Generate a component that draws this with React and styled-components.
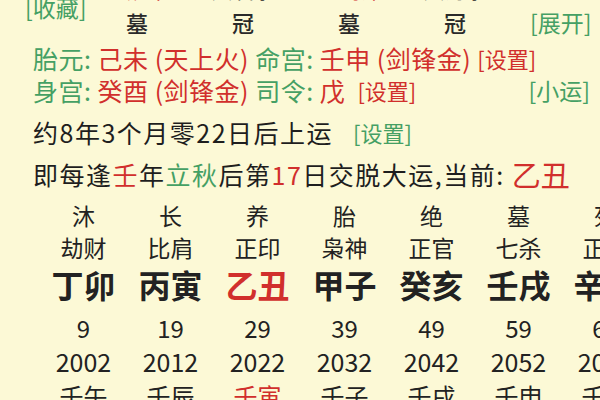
import React from "react";
import styled, { createGlobalStyle } from "styled-components";

const GREEN = "#45a064";
const RED = "#d12f2c";
const DARK = "#1e1e1e";
const FONT = `"Noto Sans CJK SC", "Noto Sans", sans-serif`;

const Global = createGlobalStyle`
  html, body { margin: 0; padding: 0; background: #fcf9d6; }
  body { font-family: ${FONT}; color: ${DARK}; overflow: hidden; }
`;

const Page = styled.div`
  width: 600px;
  height: 400px;
  overflow: hidden;
  background: #fcf9d6;
`;

const HeadGrid = styled.div`
  display: grid;
  grid-template-columns: 59px repeat(4, 106px) auto;
  padding-left: 25px;
  height: ${(p) => p.$h}px;
  margin-top: ${(p) => p.$mt || 0}px;
  align-items: center;
`;

const CutText = styled.div`
  font-size: 21px;
  line-height: 24px;
  color: ${(p) => (p.$red ? RED : DARK)};
  text-align: ${(p) => p.$align || "center"};
  white-space: nowrap;
`;

const Link = styled.span`
  color: ${(p) => (p.$red ? RED : GREEN)};
  font-size: ${(p) => p.$size || 22}px;
  line-height: 22px;
  letter-spacing: 0;
  white-space: nowrap;
  margin-left: ${(p) => p.$ml || 0}px;
`;

const CornerLink = styled(Link)`
  align-self: start;
  margin-top: -5px;
`;

const RightLink = styled(Link)`
  padding-left: 22px;
`;

const Pillar = styled.div`
  font-size: 22px;
  line-height: 36px;
  color: #2a2a2a;
  text-align: center;
  font-weight: 500;
`;

const InfoLine = styled.div`
  display: flex;
  align-items: center;
  padding-left: 33px;
  padding-right: 10px;
  height: ${(p) => p.$h}px;
  margin-top: ${(p) => p.$mt || 0}px;
  font-size: 25px;
  letter-spacing: ${(p) => p.$ls || 0}px;
  white-space: nowrap;
`;

const G = styled.span`
  color: ${GREEN};
`;
const R = styled.span`
  color: ${RED};
  font-size: ${(p) => (p.$big ? "29px" : "inherit")};
  letter-spacing: ${(p) => (p.$big ? "0" : "inherit")};
`;
const D = styled.span`
  color: ${DARK};
`;

const Spacer = styled.span`
  flex: 1;
`;

const Table = styled.div`
  display: grid;
  grid-template-columns: repeat(7, 87px);
  grid-template-rows: 34px 30px 44px 42px 26px 42px;
  grid-auto-flow: column;
  padding-left: 40px;
`;

const Cell = styled.div`
  display: flex;
  align-items: center;
  justify-content: center;
  white-space: nowrap;
  font-size: ${(p) => p.$size}px;
  font-weight: ${(p) => (p.$bold ? 700 : 400)};
  color: ${(p) => (p.$red ? RED : "#222")};
  font-family: ${FONT};
`;

const columns = [
  ["沐", "劫财", "丁卯", "9", "2002", "壬午"],
  ["长", "比肩", "丙寅", "19", "2012", "壬辰"],
  ["养", "正印", "乙丑", "29", "2022", "壬寅", true],
  ["胎", "枭神", "甲子", "39", "2032", "壬子"],
  ["绝", "正官", "癸亥", "49", "2042", "壬戌"],
  ["墓", "七杀", "壬戌", "59", "2052", "壬申"],
  ["死", "正财", "辛酉", "69", "2062", "壬午"],
];

export default function App() {
  return (
    <Page>
      <Global />
      <HeadGrid $h={24} $mt={-23}>
        <span />
        <CutText $red $align="right">炉中火</CutText>
        <CutText>大溪水</CutText>
        <CutText $red $align="right">剑锋金</CutText>
        <CutText>大海水</CutText>
      </HeadGrid>
      <HeadGrid $h={41}>
        <CornerLink $size={23}>[收藏]</CornerLink>
        <Pillar>墓</Pillar>
        <Pillar>冠</Pillar>
        <Pillar>墓</Pillar>
        <Pillar>冠</Pillar>
        <RightLink $size={23}>[展开]</RightLink>
      </HeadGrid>
      <InfoLine $h={32} $ls={0.5}>
        <G>胎元:&nbsp;</G>
        <R>己未 (天上火)&nbsp;</R>
        <G>命宫:&nbsp;</G>
        <R>壬申 (剑锋金)&nbsp;</R>
        <Link $red>[设置]</Link>
      </InfoLine>
      <InfoLine $h={32} $ls={0.5}>
        <G>身宫:&nbsp;</G>
        <R>癸酉 (剑锋金)&nbsp;</R>
        <G>司令:&nbsp;</G>
        <R>戊&nbsp;&nbsp;</R>
        <Link $red>[设置]</Link>
        <Spacer />
        <Link $size={23}>[小运]</Link>
      </InfoLine>
      <InfoLine $h={36} $mt={8} $ls={1.5}>
        <D>约8年3个月零22日后上运</D>
        <Link $ml={20}>[设置]</Link>
      </InfoLine>
      <InfoLine $h={48} $ls={1.5}>
        <D>即每逢</D>
        <R>壬</R>
        <D>年</D>
        <G>立秋</G>
        <D>后第</D>
        <R>17</R>
        <D>日交脱大运,当前:&nbsp;</D>
        <R $big>乙丑</R>
      </InfoLine>
      <Table>
        {columns.map((c, i) => (
          <React.Fragment key={i}>
            <Cell $size={23}>{c[0]}</Cell>
            <Cell $size={23}>{c[1]}</Cell>
            <Cell $size={32} $bold $red={c[6]}>{c[2]}</Cell>
            <Cell $size={24}>{c[3]}</Cell>
            <Cell $size={25}>{c[4]}</Cell>
            <Cell $size={24} $red={c[6]}>{c[5]}</Cell>
          </React.Fragment>
        ))}
      </Table>
    </Page>
  );
}
